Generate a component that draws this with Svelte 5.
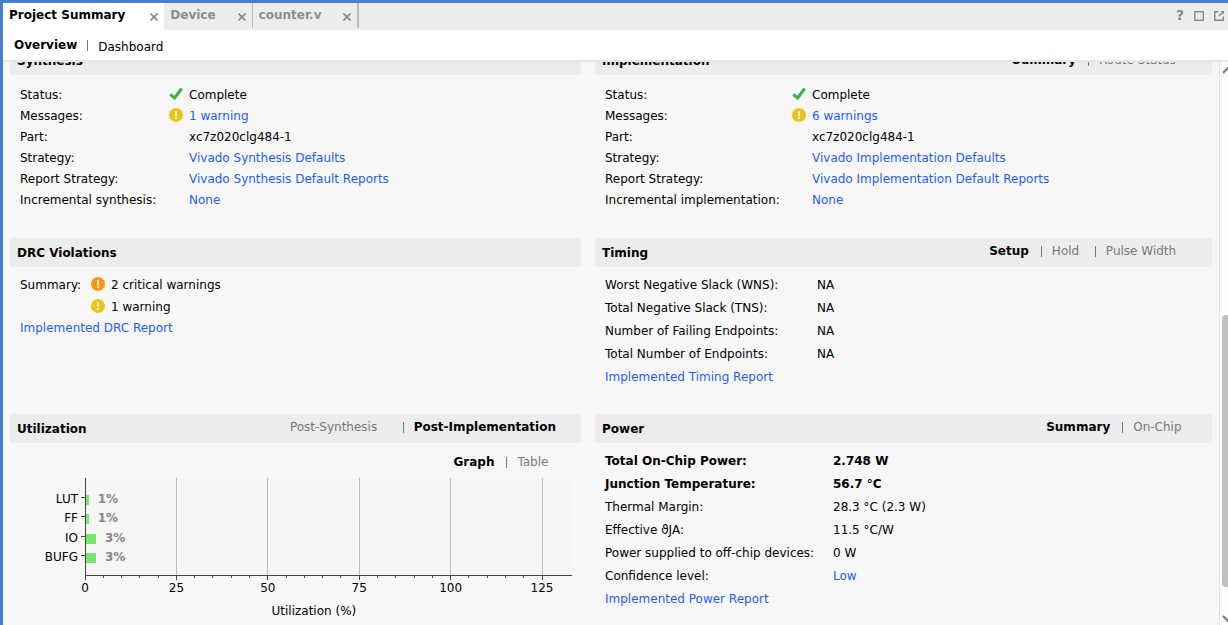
<script>
  const files = ['Project Summary', 'Device', 'counter.v'];
  const views = ['Overview', 'Dashboard'];

  const synthesis = [
    { label: 'Status:', value: 'Complete', icon: 'check' },
    { label: 'Messages:', value: '1 warning', icon: 'warning', link: true },
    { label: 'Part:', value: 'xc7z020clg484-1' },
    { label: 'Strategy:', value: 'Vivado Synthesis Defaults', link: true },
    { label: 'Report Strategy:', value: 'Vivado Synthesis Default Reports', link: true },
    { label: 'Incremental synthesis:', value: 'None', link: true }
  ];
  const implementation = [
    { label: 'Status:', value: 'Complete', icon: 'check' },
    { label: 'Messages:', value: '6 warnings', icon: 'warning', link: true },
    { label: 'Part:', value: 'xc7z020clg484-1' },
    { label: 'Strategy:', value: 'Vivado Implementation Defaults', link: true },
    { label: 'Report Strategy:', value: 'Vivado Implementation Default Reports', link: true },
    { label: 'Incremental implementation:', value: 'None', link: true }
  ];
  const drc = [
    { label: 'Summary:', value: '2 critical warnings', icon: 'critical' },
    { label: '', value: '1 warning', icon: 'warning' }
  ];
  const timing = [
    { label: 'Worst Negative Slack (WNS):', value: 'NA' },
    { label: 'Total Negative Slack (TNS):', value: 'NA' },
    { label: 'Number of Failing Endpoints:', value: 'NA' },
    { label: 'Total Number of Endpoints:', value: 'NA' }
  ];
  const power = [
    { label: 'Total On-Chip Power:', value: '2.748 W', strong: true },
    { label: 'Junction Temperature:', value: '56.7 °C', strong: true },
    { label: 'Thermal Margin:', value: '28.3 °C (2.3 W)' },
    { label: 'Effective ϑJA:', value: '11.5 °C/W' },
    { label: 'Power supplied to off-chip devices:', value: '0 W' },
    { label: 'Confidence level:', value: 'Low', link: true }
  ];

  const usage = [
    { name: 'LUT', value: 1, y: 19 },
    { name: 'FF', value: 1, y: 38 },
    { name: 'IO', value: 3, y: 58 },
    { name: 'BUFG', value: 3, y: 77 }
  ];
  const axisMax = 133.2;
  const pct = (v) => `${(v / axisMax) * 100}%`;
  const ticks = Array.from({ length: 26 }, (_, i) => i * 5);
  const majors = ticks.filter((t) => t % 25 === 0);
</script>

{#snippet statusIcon(kind)}
  {#if kind === 'check'}
    <svg class="icon" width="14" height="14" viewBox="0 0 14 14" aria-hidden="true">
      <path d="M1.200 7.400 L5.600 11 L12.700 1.500" fill="none" stroke="#3fb24a" stroke-width="3" />
    </svg>
  {:else}
    <svg class="icon" width="14" height="14" viewBox="0 0 14 14" aria-hidden="true">
      <circle cx="7" cy="7" r="7" fill={kind === 'critical' ? '#fb9513' : '#ebc51b'} />
      <path d="M6 3h2v5H6zM6 9h2v2H6z" fill="#fbf3d6" />
    </svg>
  {/if}
{/snippet}

{#snippet facts(rows, kind)}
  <dl class="facts {kind}">
    {#each rows as row}
      <dt class:strong={row.strong}>{row.label}</dt>
      <dd class:strong={row.strong} class:plain={!row.icon}>
        {#if row.icon}{@render statusIcon(row.icon)}{/if}
        {#if row.link}<a href="#details">{row.value}</a>{:else}<span>{row.value}</span>{/if}
      </dd>
    {/each}
  </dl>
{/snippet}

{#snippet toggles(names, active)}
  <div class="toggles">
    {#each names as name}
      <button type="button" class:active={name === active}><span data-text={name}>{name}</span></button>
    {/each}
  </div>
{/snippet}

<div class="window">
  <header class="tabs">
    {#each files as file, i}
      <div class="tab" class:current={i === 0}>
        <button type="button" class="name">{file}</button>
        <button type="button" class="close" aria-label="Close {file}">
          <svg width="8" height="8" viewBox="0 0 8 8"><path d="M.5 .5l7 7M7.5 .5l-7 7" stroke="#858585" stroke-width="1.6" /></svg>
        </button>
      </div>
    {/each}
    <div class="tools">
      <button type="button" class="help" aria-label="Help">?</button>
      <button type="button" aria-label="Maximize">
        <svg width="10" height="10" viewBox="0 0 10 10"><path d="M.75 .75h8.500v8.500H.75z" fill="none" stroke="#8a8a8a" stroke-width="1.500" /></svg>
      </button>
      <button type="button" aria-label="Float">
        <svg width="10" height="10" viewBox="0 0 10 10"><path d="M4.500 .75H.75v8.500h8.500V5.500M5 5L8 2" fill="none" stroke="#8a8a8a" stroke-width="1.500" /><path d="M6.500 0H10v3.500z" fill="#8a8a8a" /></svg>
      </button>
    </div>
  </header>

  <nav class="views">
    {#each views as view, i}
      <button type="button" class:active={i === 0}>{view}</button>
    {/each}
  </nav>

  <div class="body">
    <main>
      <div class="grid">
        <section class="first">
          <div class="head"><h2>Synthesis</h2></div>
          {@render facts(synthesis, 'run')}
        </section>
        <section class="first">
          <div class="head"><h2>Implementation</h2>{@render toggles(['Summary', 'Route Status'], 'Summary')}</div>
          {@render facts(implementation, 'run wide')}
        </section>
        <section>
          <div class="head"><h2>DRC Violations</h2></div>
          {@render facts(drc, 'drc')}
          <a class="report" href="#drc">Implemented DRC Report</a>
        </section>
        <section>
          <div class="head"><h2>Timing</h2>{@render toggles(['Setup', 'Hold', 'Pulse Width'], 'Setup')}</div>
          {@render facts(timing, 'timing')}
          <a class="report" href="#timing">Implemented Timing Report</a>
        </section>
        <section>
          <div class="head"><h2>Utilization</h2>{@render toggles(['Post-Synthesis', 'Post-Implementation'], 'Post-Implementation')}</div>
          <div class="mode">{@render toggles(['Graph', 'Table'], 'Graph')}</div>
          <div class="chart">
            <svg width="100%" height="142" role="img" aria-label="Utilization by resource">
              <rect width="100%" height="97" fill="#f5f5f5" />
              {#each majors.slice(1) as t}
                <line x1={pct(t)} x2={pct(t)} y1="0" y2="97" stroke="#bdbdbd" />
              {/each}
              {#each ticks as t}
                <line x1={pct(t)} x2={pct(t)} y1="97" y2={t % 25 ? 100 : 102} stroke="#444" />
              {/each}
              {#each majors as t}
                <text x={pct(t)} y="114" text-anchor="middle">{t}</text>
              {/each}
              {#each usage as u}
                <rect x="0" y={u.y - 2} width={pct(u.value)} height="10" fill="#76e76c" />
                <line x1="-4" x2="0" y1={u.y + 0.5} y2={u.y + 0.5} stroke="#444" />
                <text x="-7" y={u.y + 6} text-anchor="end">{u.name}</text>
                <text class="amount" x={pct(u.value)} dx="9" y={u.y + 6}>{u.value}%</text>
              {/each}
              <line x1="0.5" x2="0.5" y1="0" y2="98" stroke="#444" />
              <line x1="0" x2="100%" y1="97.5" y2="97.5" stroke="#444" />
              <text x="47%" y="137" text-anchor="middle">Utilization (%)</text>
            </svg>
          </div>
        </section>
        <section>
          <div class="head"><h2>Power</h2>{@render toggles(['Summary', 'On-Chip'], 'Summary')}</div>
          {@render facts(power, 'power')}
          <a class="report" href="#power">Implemented Power Report</a>
        </section>
      </div>
    </main>
    <div class="scroll" aria-hidden="true">
      <svg width="12" height="8" viewBox="0 0 12 8"><path d="M1 7l5-5 5 5" fill="none" stroke="#777" stroke-width="2" /></svg>
      <div class="track"><div class="thumb"></div></div>
      <svg width="12" height="8" viewBox="0 0 12 8"><path d="M1 1l5 5 5-5" fill="none" stroke="#777" stroke-width="2" /></svg>
    </div>
  </div>
</div>

<style>
  .window {
    box-sizing: border-box;
    height: 100vh;
    display: flex;
    flex-direction: column;
    overflow: hidden;
    border: solid #4a7dcf;
    border-width: 3px 0 0 3px;
    background: #f7f7f7;
    color: #000;
    font: 12px/21px "DejaVu Sans", sans-serif;
  }
  button {
    border: 0;
    padding: 0;
    background: none;
    color: inherit;
    font: inherit;
    cursor: pointer;
  }
  a {
    color: #1f5cf5;
    text-decoration: none;
  }
  .tabs {
    display: flex;
    flex: none;
    height: 27px;
    background: #ececec;
  }
  .tab {
    display: flex;
    align-items: center;
    gap: 22px;
    height: 25px;
    padding: 0 6px;
    border-right: 1px solid #bdbdbd;
    color: #8c8c8c;
    font-weight: bold;
  }
  .tab.current {
    gap: 25px;
    height: 27px;
    border: 0;
    background: #fff;
    color: #000;
  }
  .tab.current .name {
    margin-bottom: 2px;
  }
  .tab.current .close {
    padding-top: 1px;
  }
  .tab:nth-child(3) {
    border-right-width: 2px;
  }
  .close {
    display: flex;
    padding-top: 3px;
  }
  .tools {
    display: flex;
    align-items: center;
    gap: 10px;
    margin-left: auto;
    padding: 0 4px 2px 0;
    color: #858585;
  }
  .tools svg {
    display: block;
  }
  .help {
    font-size: 14px;
    font-weight: bold;
  }
  .views {
    display: flex;
    flex: none;
    align-items: center;
    box-sizing: border-box;
    height: 32px;
    padding: 1px 0 0 11px;
    border-bottom: 2px solid #e7e7e7;
    background: #fff;
  }
  .views button + button {
    padding-top: 4px;
    display: flex;
    align-items: center;
  }
  .views button + button::before,
  .toggles button + button::before {
    content: "";
    width: 1px;
    height: 11px;
    margin: 0 10px 0 12px;
    background: #777;
  }
  .views button + button::before {
    margin: 0 10px 4px;
  }
  .views .active,
  .strong {
    font-weight: bold;
  }
  .body {
    display: flex;
    flex: 1;
    min-height: 0;
    overflow: hidden;
  }
  main {
    flex: 1;
    min-width: 0;
    overflow: hidden;
    padding: 0 7px;
  }
  /* The pane is scrolled part of the way down. */
  .grid {
    display: grid;
    grid-template-columns: 571fr 617fr;
    column-gap: 14px;
    margin-top: -16px;
  }
  section {
    padding-bottom: 25px;
  }
  .first {
    padding-bottom: 27px;
  }
  .head {
    display: flex;
    align-items: center;
    justify-content: space-between;
    height: 29px;
    padding: 0 25px 0 7px;
    background: #ececec;
  }
  h2 {
    margin: 0;
    padding-top: 2px;
    font: inherit;
    font-weight: bold;
  }
  .toggles {
    display: flex;
    padding-bottom: 2px;
    color: #777;
  }
  .first .toggles {
    padding: 0;
  }
  .toggles button {
    display: flex;
    align-items: center;
  }
  .toggles .active {
    color: #000;
    font-weight: bold;
  }
  .toggles span {
    display: grid;
    justify-items: start;
    height: 21px;
  }
  /* Keeps each choice as wide as its bold form. */
  .toggles span::after {
    content: attr(data-text);
    height: 0;
    overflow: hidden;
    visibility: hidden;
    font-weight: bold;
  }
  .facts {
    display: grid;
    grid-auto-rows: 23px;
    align-items: center;
    margin: 0;
    padding: 7px 10px 0;
  }
  .run {
    grid-template-columns: 149px 1fr;
    grid-auto-rows: 21px;
    padding-top: 10px;
  }
  .wide {
    grid-template-columns: 187px 1fr;
  }
  .drc {
    grid-template-columns: 71px 1fr;
    grid-auto-rows: 22px;
  }
  .timing {
    grid-template-columns: 212px 1fr;
  }
  .power {
    grid-template-columns: 228px 1fr;
  }
  dd {
    display: flex;
    align-items: center;
    gap: 6px;
    margin: 0;
  }
  .run .plain {
    padding-left: 20px;
  }
  .icon {
    flex: none;
    margin-bottom: 3px;
  }
  .report {
    display: block;
    padding-left: 10px;
    line-height: 23px;
  }
  .drc + .report {
    line-height: 21px;
  }
  .mode {
    display: flex;
    justify-content: flex-end;
    padding: 9px 28px 0 0;
  }
  .chart {
    padding: 3px 9px 0 75px;
  }
  .chart svg {
    display: block;
    overflow: visible;
  }
  .chart line,
  .chart rect {
    shape-rendering: crispEdges;
  }
  .amount {
    fill: #858585;
    font-weight: bold;
  }
  .scroll {
    display: flex;
    flex: none;
    flex-direction: column;
    width: 6px;
    padding: 4px 0 2px 2px;
    border-left: 1px solid #e2e2e2;
    background: #fdfdfd;
    overflow: hidden;
  }
  .scroll svg {
    flex: none;
  }
  .track {
    display: flex;
    flex: 1;
    flex-direction: column;
    justify-content: flex-end;
    padding-bottom: 28px;
  }
  .thumb {
    width: 12px;
    height: 53%;
    border-radius: 4px;
    background: #c1c1c1;
  }
</style>
